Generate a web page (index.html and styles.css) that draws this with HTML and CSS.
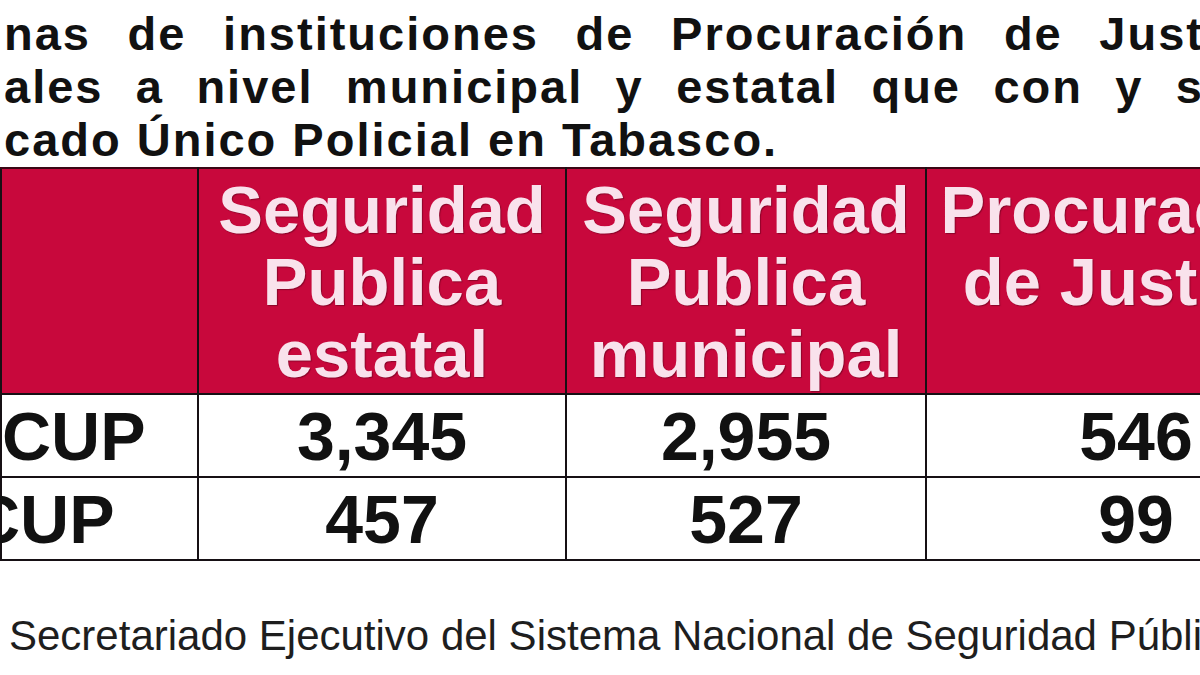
FILE: index.html
```html
<!DOCTYPE html>
<html lang="es">
<head>
<meta charset="utf-8">
<link rel="stylesheet" href="styles.css">
</head>
<body>
<div class="page">
  <div class="intro">
    <div class="line line-just">nas de instituciones de Procuración de Just</div>
    <div class="line line-just">ales a nivel municipal y estatal que con y s</div>
    <div class="line">cado Único Policial en Tabasco.</div>
  </div>
  <table class="data">
    <colgroup>
      <col class="c1"><col class="c2"><col class="c3"><col class="c4">
    </colgroup>
    <thead>
      <tr>
        <th></th>
        <th>Seguridad<br>Publica<br>estatal</th>
        <th>Seguridad<br>Publica<br>municipal</th>
        <th>Procuración<br>de Justicia</th>
      </tr>
    </thead>
    <tbody>
      <tr>
        <td class="label label-a">CUP</td>
        <td>3,345</td>
        <td>2,955</td>
        <td>546</td>
      </tr>
      <tr>
        <td class="label label-b">CUP</td>
        <td>457</td>
        <td>527</td>
        <td>99</td>
      </tr>
    </tbody>
  </table>
  <div class="source">Secretariado Ejecutivo del Sistema Nacional de Seguridad Pública</div>
</div>
</body>
</html>
```

FILE: styles.css
```css
html, body {
  margin: 0;
  padding: 0;
  background: #ffffff;
}
body {
  width: 1200px;
  height: 675px;
  overflow: hidden;
  font-family: "Liberation Sans", Arial, sans-serif;
  color: #111111;
}
.page {
  width: 1200px;
  overflow: hidden;
}
.intro {
  padding: 7px 0 0 4px;
  font-weight: 700;
  font-size: 47px;
  line-height: 53px;
  letter-spacing: 2px;
  white-space: nowrap;
}
.line-just {
  width: 1200px;
  white-space: normal;
  text-align: justify;
  text-align-last: justify;
}
.data {
  border-collapse: collapse;
  table-layout: fixed;
  width: 1345px;
  margin-top: 1px;
}
.c1 { width: 197px; }
.c2 { width: 368px; }
.c3 { width: 360px; }
.c4 { width: 420px; }
.data th, .data td {
  border: 2px solid #161014;
  padding: 0;
  text-align: center;
}
.data th {
  background: #c8083c;
  color: #f9e2ec;
  font-size: 67px;
  line-height: 72px;
  font-weight: 700;
  vertical-align: top;
  padding-top: 5px;
  height: 219px;
  text-shadow: 1px 1px 1px rgba(90, 0, 25, 0.55);
  white-space: nowrap;
}
.data thead th {
  border-top-color: #3a0614;
}
.data td {
  height: 81px;
  font-size: 68px;
  font-weight: 700;
  vertical-align: middle;
  white-space: nowrap;
}
.data td.label {
  text-align: left;
}
.label-a { padding-left: 1px; }
.label-b { text-indent: -31px; }
.source {
  margin-top: 51px;
  padding-left: 9px;
  font-size: 42px;
  line-height: 48px;
  color: #1e1e1e;
  white-space: nowrap;
}
```
